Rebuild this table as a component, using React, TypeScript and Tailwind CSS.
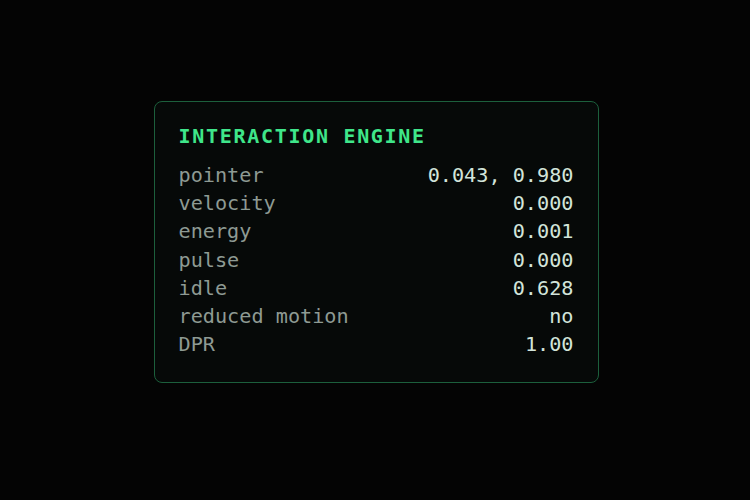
const rows: [string, string][] = [
  ["pointer", "0.043, 0.980"],
  ["velocity", "0.000"],
  ["energy", "0.001"],
  ["pulse", "0.000"],
  ["idle", "0.628"],
  ["reduced motion", "no"],
  ["DPR", "1.00"],
];

const App = () => {
  return (
    <div className="flex h-[500px] w-[750px] items-start justify-center bg-[#040404] pt-[101px] pl-[2px] font-['DejaVu_Sans_Mono',monospace]">
      <section className="w-[445px] rounded-lg border border-[#1c5f3c] bg-[#060908] pt-5 pr-6 pb-6 pl-6">
        <h1 className="text-[20px] leading-7 font-bold tracking-[0.085em] text-[#3fe68a]">
          INTERACTION ENGINE
        </h1>
        <dl className="mt-[11px] flex flex-col text-[20.2px] leading-[28.2px]">
          {rows.map(([label, value]) => (
            <div key={label} className="flex justify-between">
              <dt className="text-[#8e9a93]">{label}</dt>
              <dd className="text-[#d2e4da]">{value}</dd>
            </div>
          ))}
        </dl>
      </section>
    </div>
  );
};

export default App;
